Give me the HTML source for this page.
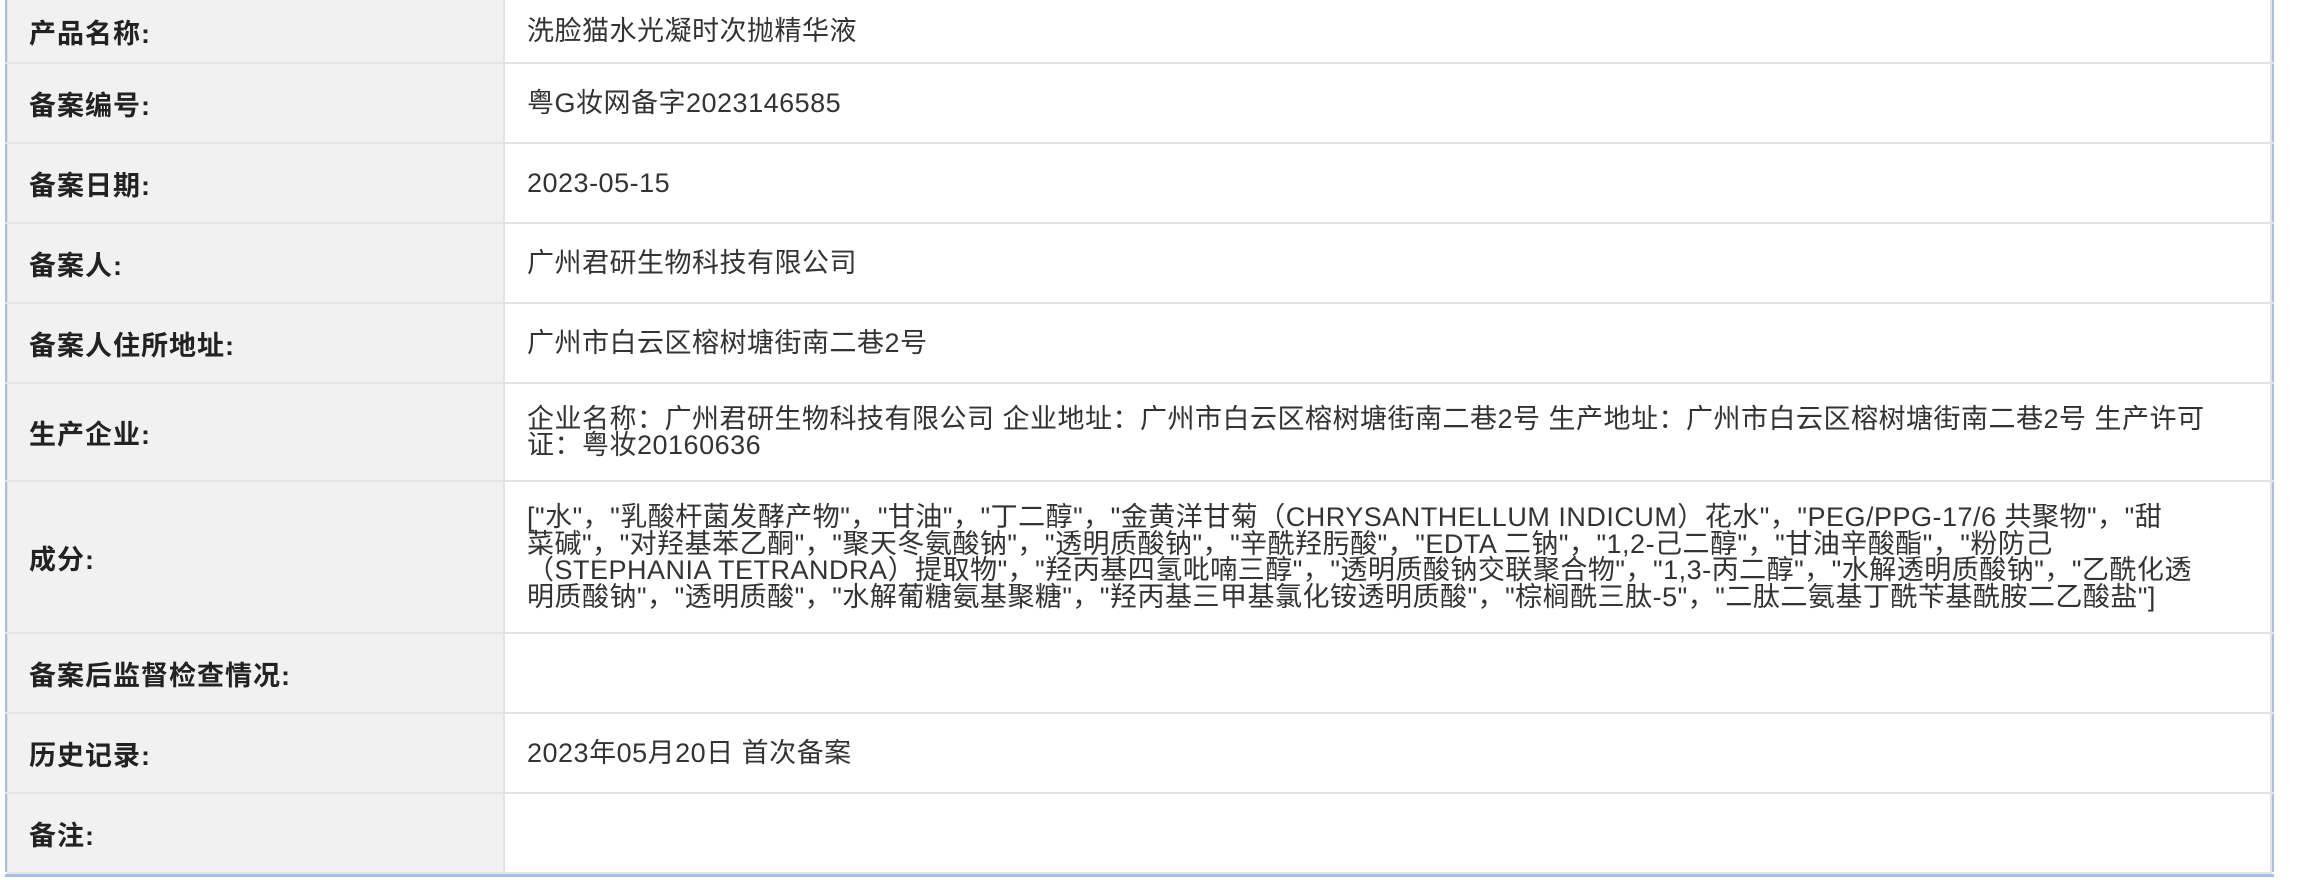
<!DOCTYPE html>
<html><head><meta charset="utf-8"><style>
body{margin:0;width:2299px;height:891px;background:#fff;position:relative;overflow:hidden;font-family:"Liberation Sans","Noto Sans CJK SC",sans-serif;color:#333}
.row{position:absolute;left:5px;width:2269px;border-left:2px solid #a4c0e8;border-right:2px solid #a4c0e8;box-sizing:border-box;display:flex}
.l{width:498px;background:#f1f1f1;border-left:1px solid #e3e3e3;border-right:2px solid #e3e3e3;box-sizing:border-box;display:flex;align-items:center;padding-left:21px;font-weight:bold;font-size:27px;letter-spacing:1px;color:#222}
.v{flex:1;display:flex;align-items:center;padding-left:22px;font-size:27px;letter-spacing:0.5px;line-height:26.5px;white-space:nowrap;border-right:2px solid #e3e3e3}
.line{position:absolute;left:5px;width:2269px;height:2px;background:#e3e3e3}
</style></head><body>
<div class="row" style="top:0;height:62px"><div class="l">产品名称:</div><div class="v">洗脸猫水光凝时次抛精华液</div></div>
<div class="line" style="top:62px"></div>
<div class="row" style="top:64px;height:78px"><div class="l">备案编号:</div><div class="v">粤G妆网备字2023146585</div></div>
<div class="line" style="top:142px"></div>
<div class="row" style="top:144px;height:78px"><div class="l">备案日期:</div><div class="v">2023-05-15</div></div>
<div class="line" style="top:222px"></div>
<div class="row" style="top:224px;height:78px"><div class="l">备案人:</div><div class="v">广州君研生物科技有限公司</div></div>
<div class="line" style="top:302px"></div>
<div class="row" style="top:304px;height:78px"><div class="l">备案人住所地址:</div><div class="v">广州市白云区榕树塘街南二巷2号</div></div>
<div class="line" style="top:382px"></div>
<div class="row" style="top:384px;height:96px"><div class="l">生产企业:</div><div class="v"><div>企业名称：广州君研生物科技有限公司 企业地址：广州市白云区榕树塘街南二巷2号 生产地址：广州市白云区榕树塘街南二巷2号 生产许可<br>证：粤妆20160636</div></div></div>
<div class="line" style="top:480px"></div>
<div class="row" style="top:482px;height:150px"><div class="l">成分:</div><div class="v"><div>["水"，"乳酸杆菌发酵产物"，"甘油"，"丁二醇"，"金黄洋甘菊（CHRYSANTHELLUM INDICUM）花水"，"PEG/PPG-17/6 共聚物"，"甜<br>菜碱"，"对羟基苯乙酮"，"聚天冬氨酸钠"，"透明质酸钠"，"辛酰羟肟酸"，"EDTA 二钠"，"1,2-己二醇"，"甘油辛酸酯"，"粉防己<br>（STEPHANIA TETRANDRA）提取物"，"羟丙基四氢吡喃三醇"，"透明质酸钠交联聚合物"，"1,3-丙二醇"，"水解透明质酸钠"，"乙酰化透<br>明质酸钠"，"透明质酸"，"水解葡糖氨基聚糖"，"羟丙基三甲基氯化铵透明质酸"，"棕榈酰三肽-5"，"二肽二氨基丁酰苄基酰胺二乙酸盐"]</div></div></div>
<div class="line" style="top:632px"></div>
<div class="row" style="top:634px;height:78px"><div class="l">备案后监督检查情况:</div><div class="v"></div></div>
<div class="line" style="top:712px"></div>
<div class="row" style="top:714px;height:78px"><div class="l">历史记录:</div><div class="v">2023年05月20日 首次备案</div></div>
<div class="line" style="top:792px"></div>
<div class="row" style="top:794px;height:78px"><div class="l">备注:</div><div class="v"></div></div>
<div class="line" style="top:872px;left:7px;width:2265px"></div>
<div style="position:absolute;top:874px;left:5px;width:2269px;height:3px;background:#a4c0e8"></div>
</body></html>
